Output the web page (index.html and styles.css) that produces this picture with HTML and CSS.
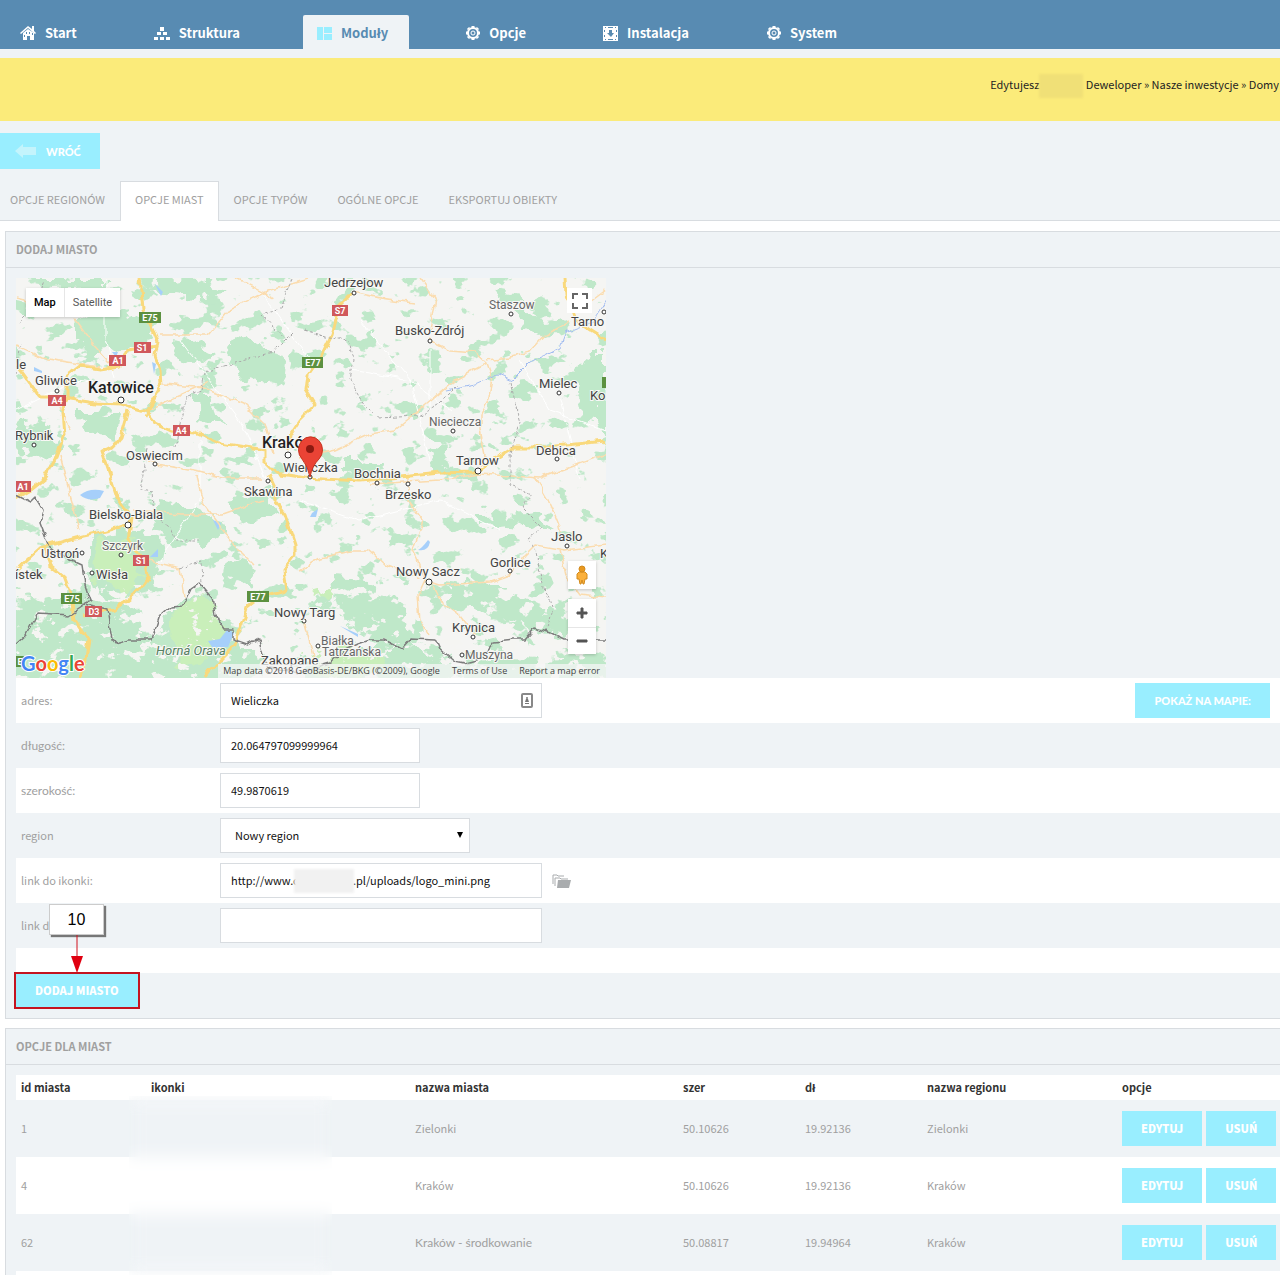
FILE: index.html
```html
<!DOCTYPE html>
<html lang="pl">
<head>
    <meta charset="UTF-8">
    <title>Opcje miast</title>
    <link rel="stylesheet" href="styles.css">
</head>
<body>
    <header class="topbar">
        <nav class="menu">
            <a href="#"><svg width="17" height="16" viewBox="0 0 17 16"><path d="M8 1L0 8l1 1 7-6 7 6 1-1-2-2V1h-2v3z"/><path d="M8 4L3 8v7h4v-4h3v4h4V8z"/><path class="hole" d="M6 7h1v2H6zM9 7h1v2H9zM12 8h1v2h-1zM4 10h1v2H4z"/></svg>Start</a>
            <a href="#"><svg width="17" height="16" viewBox="0 0 17 16"><path d="M6 2h4v4H6zM3 7h4v3H3zM9 7h4v3H9zM0 12h4v3H0zM6 12h4v3H6zM12 12h4v3h-4z"/></svg>Struktura</a>
            <a href="#" class="active"><svg width="16" height="16" viewBox="0 0 16 16"><path d="M0 2h6v13H0zM7 2h8v6H7zM7 9h8v6H7z"/></svg>Moduły</a>
            <a href="#"><svg width="16" height="16" viewBox="0 0 16 16"><circle class="ring" cx="8" cy="8" r="5"/><path class="teeth" d="M8 1v2M8 13v2M1 8h2M13 8h2M3 3l1 1M12 12l1 1M3 13l1-1M12 4l1-1"/><circle class="thin" cx="8" cy="8" r="2"/></svg>Opcje</a>
            <a href="#"><svg width="16" height="16" viewBox="0 0 16 16"><path d="M0 1h15v15H0z"/><path class="hole" d="M2 2h1v1H2zM12 2h1v1h-1zM2 14h1v1H2zM12 14h1v1h-1zM1 5h1v2H1zM1 10h1v2H1zM13 5h1v2h-1zM13 10h1v2h-1zM5 2h5v1H5zM5 14h5v1H5zM6 5h3v3h2l-3 4-4-4h2z"/></svg>Instalacja</a>
            <a href="#"><svg width="16" height="16" viewBox="0 0 16 16"><circle class="ring" cx="8" cy="8" r="5"/><path class="teeth" d="M8 1v2M8 13v2M1 8h2M13 8h2M3 3l1 1M12 12l1 1M3 13l1-1M12 4l1-1"/><circle class="thin" cx="8" cy="8" r="2"/></svg>System</a>
        </nav>
    </header>

    <div class="notice">Edytujesz<span class="smudge"></span> Deweloper » Nasze inwestycje » Domy</div>

    <div class="toolbar">
        <button type="button" class="btn back accented"><svg width="21" height="14" viewBox="0 0 21 14"><path d="M0 7l8-7v3h13v8H8v3z"/></svg>WRÓĆ</button>
    </div>

    <nav class="tabs">
        <a href="#">OPCJE REGIONÓW</a>
        <a href="#" class="active">OPCJE MIAST</a>
        <a href="#">OPCJE TYPÓW</a>
        <a href="#">OGÓLNE OPCJE</a>
        <a href="#">EKSPORTUJ OBIEKTY</a>
    </nav>

    <main>
        <section class="panel">
            <h2>DODAJ MIASTO</h2>
            <form class="panel-body">
                <div class="map">
                    <svg class="map-canvas" viewBox="16 278 590 400">
                        <defs>
                            <filter id="ragged" x="-5%" y="-5%" width="110%" height="110%">
                                <feTurbulence type="fractalNoise" baseFrequency="0.06" numOctaves="3" seed="4"/>
                                <feDisplacementMap in="SourceGraphic" scale="26" xChannelSelector="R" yChannelSelector="G"/>
                            </filter>
                            <filter id="wobble" x="-5%" y="-5%" width="110%" height="110%">
                                <feTurbulence type="fractalNoise" baseFrequency="0.09" numOctaves="2" seed="9"/>
                                <feDisplacementMap in="SourceGraphic" scale="7" xChannelSelector="R" yChannelSelector="G"/>
                            </filter>
                            <filter id="woods" x="0" y="0" width="100%" height="100%" color-interpolation-filters="sRGB">
                                <feTurbulence type="fractalNoise" baseFrequency="0.045 0.06" numOctaves="4" seed="21"/>
                                <feColorMatrix values="0 0 0 0 0.75  0 0 0 0 0.91  0 0 0 0 0.79  22 0 0 0 -13.2"/>
                            </filter>
                            <filter id="valleys" x="0" y="0" width="100%" height="100%" color-interpolation-filters="sRGB">
                                <feTurbulence type="fractalNoise" baseFrequency="0.06 0.08" numOctaves="4" seed="33"/>
                                <feColorMatrix values="0 0 0 0 0.96  0 0 0 0 0.96  0 0 0 0 0.95  22 0 0 0 -13.4"/>
                            </filter>
                        </defs>
                        <rect x="16" y="278" width="590" height="400" fill="#f5f5f3"/>
                        <rect x="16" y="278" width="590" height="400" filter="url(#woods)"/>
                        <g fill="#bfe8c9" filter="url(#ragged)">
                            <path d="M72 322l40-12 30 10 8 22-26 8-30 2-22-14z"/>
                            <path d="M30 280h80l-12 8-50 2zM140 282l40-4 30 6 22 12-26 4-40-6z"/>
                            <path d="M168 342l26 2 20 10-10 8-28-6zM224 352l22-14 30 14 16 20-10 14-40-8z"/>
                            <path d="M196 395l18 0 6 30-20-4zM20 420l30 6 12 24-8 12-38-14z"/>
                            <path d="M80 412l40 0-4 24-30-4zM160 500l50 10 16 22-22 12-50-10z"/>
                            <path d="M584 350l22 0v80l-24-12-8-34z"/>
                            <path d="M500 290l20 4 4 12-26-6zM520 312l36 8 18 10-26 10-24-14z"/>
                            <path d="M340 462l40 0 6 10-36 4zM424 446l20 4 8 26-20-4z"/>
                            <path d="M480 516l56-4 22 14-10 4-30-8-38 2z"/>
                            <path d="M6 600l70-4 60 12 6 36 12 4 12-36 34-22 16 24 20 34 22 0 10 40H6z"/>
                            <path d="M330 578l36 2 30 20 24 30-14 16-40-8-30-28z"/>
                            <path d="M444 580l60 8 60 30 16 18-40-4-40-14-50-14z"/>
                            <path d="M90 535l50-6 24 20-12 38-44 14-20-30z"/>
                            <path d="M230 500l36-8 14 20-36 12zM230 560l26 4-6 24-24-10z"/>
                            <path d="M300 660l60-14 60 0 40 20 40-10 40 4 70-8v36H300z"/>
                        </g>
                        <g fill="#c9efba" filter="url(#ragged)">
                            <path d="M98 540l34 2 12 36-20 16-30-16z"/>
                            <path d="M176 612l28-20 20 40-20 30-30 4zM306 652l40-4 40 14-10 16h-60zM310 592l24-8-4 14z"/>
                        </g>
                        <rect x="16" y="585" width="590" height="93" filter="url(#valleys)"/>
                        <g fill="#a6cffa">
                            <path d="M80 495q10-8 24-4l-4 7q-12 4-20-3zM208 641l12-2 8-10 6 4-6 14-16 0zM150 557l8-8v8zM312 513l6-4-2 8-6 0zM418 550q10 2 12-8l-2-2q-6 8-10 10zM340 626l18 8v3zM155 284l8 8-2 4zM112 352h6l-2 5zM152 362l4 2-2 10zM34 367l8 4 0 2-8-2zM213 520l8 3-3 7z"/>
                        </g>
                        <g class="lanes" filter="url(#wobble)">
                            <path d="M105 278v60l10 40M16 410l60-30 80 10M180 340l60 80 40 90M260 290l50 70M360 320l50 60 20 80M430 350v60M350 370l60 10 40 30M560 400l20 80M300 500l60 20 80-20 60 30M200 440v60l-40 60M520 360l30 50 56 20"/>
                        </g>
                        <g class="roads" filter="url(#wobble)">
                            <path d="M16 346l26 12 24 4 34 5M75 320l15 20 20 22M148 410l60-28M164 384l40 4 40 16 20 20 10 30M158 335l50 0 20-24 40-20 40-12M235 278l40 20M60 455l10 40 10 34M70 430l-10-24M148 462l50 10 24 6 40 0M196 475l8 30 30 40 20 20M133 510l50 4 40 0 40-14M145 560l35 8 4 30"/>
                            <path d="M16 298l40 10M353 292l27 6 35 5M420 278l15 20-5 32M430 340l20 10 25 2 12 11 6 17-3 15-10 20v15l5 25-5 10M487 360l23-3 20-5 15-17 25-13"/>
                            <path d="M487 363l-32 17-23 20-22 18-15 12-25 4-35 16-35 8M408 478v22l15 20-3 10-7 20 5 10 7 20-7 15 2 25 8 15M425 580l15 5 50-3 20-7 15-20 10-10 30 5 41-5M535 478l13 22 7 15 10 25M560 550l5 25 15 20 26 3M300 570l20-12 30-7h20l15 14 35 13M430 580l10 20 20 15 15 20M370 484l70-4 40-6 60 4 66-24M304 620l10 40M606 290l-16 12"/>
                        </g>
                        <g class="highway" filter="url(#wobble)">
                            <path d="M16 364l24 33 17 0 38 6 25 1 25 7 10 12 15 7 25 2 25 11 45 7 0 13 10 10 30 5 55 3 80-8 35-1 25-16 15-9h30l61-6"/>
                            <path d="M140 278l3 32 10 20 5 13-3 12 6 15 1 15-14 25-3 8M67 400l-5 12 2 23-9 25-10 18-15 12-14 8M67 400l0-24 13-10 20 3 20-3 7-16 31-4"/>
                            <path d="M128 410l-8 28-6 8-12 6 8 23 8 25 14 18-4 22 18 22 2 15-13 17-20 15-32 6M16 570l24-22 35-10 35-8 20-6M45 548l5 17 15 12 7 18 3 25 14 20-4 25-5 15"/>
                            <path d="M268 475l7 15v12l10 13 10 30v10l-12 15 3 20-26 7-13 10-7 23-5 15-20 20-10 13"/>
                            <path d="M353 292l-13 13-8 30-10 20-14 20-2 15 9 15-15 15-10 15-2 15M565 278l1 17 9 25 15 10 16 10"/>
                        </g>
                        <path class="border dashed" filter="url(#wobble)" d="M16 326l10-10 10-16 8-20M16 374l5-30M305 330l24 8 20 2 5 20-4 20 14 24 14 14 40-2 20-12 20-20M292 332l-20 20-40 12-28 8-2 20-16 6-6 30-4 20M292 278l-12 30-18 6 24 26M148 450l-8 40 12 2 2 24 16 12 4 12 26 0M180 568l22-6 1 22M510 382l10 40-10 34 0 30 22 8-10 14 20 20-14 10 8 14 6 30 10 30-6 20"/>
                        <path class="river" filter="url(#wobble)" d="M606 300l-14 22-26 10-6 16-30 14-18 18-14-6-22 10-30 6"/>
                        <path class="border" filter="url(#wobble)" d="M16 645l11-10 11-22 32 2 15-10 22 5 5 30 3 4 15-4h22l8-25 10-9 13-1 7-15 10-7 12 14 3 18 10 15h8v10l15 5 10-5 4 15 6 13 32 4 30-9 15-13 13-6 12-4h15l17 9 10-11 23 1 5 11 15 12 10 2 15-4 15-18 20-2h10l10-12 15 5 15 7 46 0M16 495l14 7 5-5 8 13-3 12 10 26 10 7 22 10 3 20 5 15-5 5"/>
                        <g class="shield">
                            <g class="euro"><rect x="139" y="312" width="22" height="11"/><rect x="302" y="357" width="21" height="11"/><rect x="61" y="593" width="21" height="11"/><rect x="247" y="591" width="22" height="11"/><rect x="602" y="377" width="8" height="11"/><rect x="16" y="656" width="8" height="11"/></g>
                            <g class="national"><rect x="332" y="305" width="16" height="11"/><rect x="134" y="342" width="17" height="11"/><rect x="109" y="355" width="17" height="11"/><rect x="48" y="395" width="18" height="11"/><rect x="173" y="425" width="17" height="11"/><rect x="16" y="481" width="15" height="11"/><rect x="133" y="555" width="16" height="11"/><rect x="85" y="606" width="17" height="11"/></g>
                            <text x="150" y="321">E75</text><text x="313" y="366">E77</text><text x="72" y="602">E75</text><text x="258" y="600">E77</text>
                            <text x="340" y="314">S7</text><text x="142" y="351">S1</text><text x="118" y="364">A1</text><text x="57" y="404">A4</text><text x="181" y="434">A4</text><text x="23" y="490">A1</text><text x="141" y="564">S1</text><text x="94" y="615">D3</text><text x="20" y="665">E</text>
                        </g>
                        <g class="dots">
                            <circle cx="57" cy="391" r="2"/><circle cx="34" cy="445" r="2"/><circle cx="121" cy="400" r="3"/><circle cx="354" cy="293" r="2"/><circle cx="511" cy="314" r="2"/><circle cx="430" cy="341" r="2"/><circle cx="604" cy="312" r="2"/><circle cx="559" cy="393" r="2"/><circle cx="453" cy="431" r="2"/><circle cx="155" cy="464" r="2"/><circle cx="288" cy="455" r="3"/><circle cx="268" cy="481" r="2"/><circle cx="310" cy="477" r="2"/><circle cx="377" cy="483" r="2"/><circle cx="408" cy="484" r="2"/><circle cx="478" cy="471" r="3"/><circle cx="557" cy="459" r="2"/><circle cx="128" cy="525" r="3"/><circle cx="82" cy="553" r="2"/><circle cx="121" cy="555" r="2"/><circle cx="92" cy="573" r="2"/><circle cx="567" cy="546" r="2"/><circle cx="510" cy="571" r="2"/><circle cx="429" cy="582" r="3"/><circle cx="304" cy="621" r="2"/><circle cx="473" cy="637" r="2"/><circle cx="318" cy="646" r="2"/><circle cx="462" cy="655" r="2"/>
                        </g>
                        <g class="places">
                            <text x="324" y="287">Jedrzejow</text><text x="395" y="335">Busko-Zdrój</text><text x="571" y="326">Tarno</text><text x="539" y="388">Mielec</text><text x="590" y="400">Kol</text><text x="35" y="385">Gliwice</text><text x="16" y="369">le</text><text x="15" y="440">Rybnik</text><text x="126" y="460">Oswiecim</text><text x="283" y="472">Wieliczka</text><text x="244" y="496">Skawina</text><text x="354" y="478">Bochnia</text><text x="385" y="499">Brzesko</text><text x="456" y="465">Tarnow</text><text x="536" y="455">Debica</text><text x="89" y="519">Bielsko-Biala</text><text x="41" y="558">Ustroń</text><text x="96" y="579">Wisła</text><text x="15" y="579">ístek</text><text x="551" y="541">Jaslo</text><text x="600" y="558">K</text><text x="490" y="567">Gorlice</text><text x="396" y="576">Nowy Sacz</text><text x="274" y="617">Nowy Targ</text><text x="452" y="632">Krynica</text><text x="261" y="665">Zakopane</text>
                            <text x="88" y="393" class="city">Katowice</text><text x="262" y="448" class="city">Kraków</text>
                            <g class="small"><text x="489" y="309">Staszow</text><text x="429" y="426">Nieciecza</text><text x="102" y="550">Szczyrk</text><text x="321" y="645">Białka</text><text x="322" y="656">Tatrzańska</text><text x="465" y="659">Muszyna</text></g>
                            <text x="156" y="655" class="region">Horná Orava</text>
                        </g>
                        <path d="M310 477q-2-11-8-18a12 13 0 1 1 17 0q-7 7-9 18z" fill="#ea4335" stroke="#c5331f"/>
                        <circle cx="310" cy="449" r="4" fill="#8c1a11"/>
                        <text class="google" x="21" y="671"><tspan fill="#4285f4">G</tspan><tspan fill="#ea4335">o</tspan><tspan fill="#fbbc05">o</tspan><tspan fill="#4285f4">g</tspan><tspan fill="#34a853">l</tspan><tspan fill="#ea4335">e</tspan></text>
                    </svg>
                    <div class="map-type">
                        <button type="button" class="active">Map</button>
                        <button type="button">Satellite</button>
                    </div>
                    <button type="button" class="map-full" aria-label="Fullscreen"><svg width="16" height="16" viewBox="0 0 16 16"><path d="M1 6V1h5M10 1h5v5M15 10v5h-5M6 15H1v-5"/></svg></button>
                    <div class="map-side">
                        <button type="button" aria-label="Street View"><svg width="12" height="20" viewBox="0 0 12 20"><path d="M3 7h6l2 2 0 5-2 0-1 5H7l-1-4-1 4H4l-1-5-2 0V9z" fill="#fbb03b" stroke="#d28a1c"/><circle cx="6" cy="4" r="3" fill="#e8981f" stroke="#d28a1c"/></svg></button>
                        <div class="zoom">
                            <button type="button" aria-label="Zoom in"><svg width="12" height="12" viewBox="0 0 12 12"><path d="M5 1h2v4h4v2H7v4H5V7H1V5h4z" fill="#555" stroke="#555"/></svg></button>
                            <button type="button" aria-label="Zoom out"><svg width="12" height="12" viewBox="0 0 12 12"><path d="M1 5h10v2H1z" fill="#555" stroke="#555"/></svg></button>
                        </div>
                    </div>
                    <div class="map-legal">
                        <span>Map data ©2018 GeoBasis-DE/BKG (©2009), Google</span>
                        <a href="#">Terms of Use</a>
                        <a href="#">Report a map error</a>
                    </div>
                </div>

                <div class="row">
                    <label for="adres">adres:</label>
                    <div class="field">
                        <input type="text" id="adres" class="wide" value="Wieliczka">
                        <svg class="contact" width="12" height="15" viewBox="0 0 12 15"><rect x="1" y="1" width="10" height="13" rx="1" fill="#fff" stroke="#888" stroke-width="2"/><circle cx="6" cy="5" r="1" fill="#777"/><path d="M5 6h2l1 3H4zM4 10h4v1H4z" fill="#777"/></svg>
                    </div>
                    <button type="button" class="btn show-map accented">POKAŻ NA MAPIE:</button>
                </div>
                <div class="row">
                    <label for="dlugosc" class="accented">długość:</label>
                    <input type="text" id="dlugosc" value="20.064797099999964">
                </div>
                <div class="row">
                    <label for="szerokosc" class="accented">szerokość:</label>
                    <input type="text" id="szerokosc" value="49.9870619">
                </div>
                <div class="row">
                    <label for="region">region</label>
                    <div class="select">
                        <select id="region"><option>Nowy region</option></select>
                    </div>
                </div>
                <div class="row">
                    <label for="ikonka">link do ikonki:</label>
                    <div class="field">
                        <input type="text" id="ikonka" class="wide" value="http://www.c                      .pl/uploads/logo_mini.png">
                        <span class="smudge"></span>
                    </div>
                    <svg class="folder" width="20" height="16" viewBox="0 0 20 16"><path d="M1 11V2h4l1 1h6M3 13V5h5l1 1h7" fill="none" stroke="#a9acae"/><path d="M6 7h13l-2 8H5z" fill="#a9acae"/></svg>
                </div>
                <div class="row">
                    <label for="ikonka2">link d</label>
                    <input type="text" id="ikonka2" class="wide">
                </div>
                <div class="row spacer"></div>
                <div class="submit">
                    <button type="button" class="btn">DODAJ MIASTO</button>
                    <div class="frame"></div>
                    <div class="callout">
                        <span>10</span>
                        <svg width="12" height="38" viewBox="0 0 12 38"><path d="M6 0v22" stroke="#d0101c"/><path d="M0 21h12L6 38z" fill="#e00010"/></svg>
                    </div>
                </div>
            </form>
        </section>

        <section class="panel">
            <h2>OPCJE DLA MIAST</h2>
            <div class="panel-body list">
                <table>
                    <thead>
                        <tr>
                            <th class="c-id">id miasta</th>
                            <th class="c-icon">ikonki</th>
                            <th>nazwa miasta</th>
                            <th class="c-geo">szer</th>
                            <th class="c-geo">dł</th>
                            <th class="c-region">nazwa regionu</th>
                            <th class="c-options">opcje</th>
                        </tr>
                    </thead>
                    <tbody>
                        <tr>
                            <td>1</td>
                            <td></td>
                            <td>Zielonki</td>
                            <td>50.10626</td>
                            <td>19.92136</td>
                            <td>Zielonki</td>
                            <td><div class="options"><button type="button" class="btn">EDYTUJ</button><button type="button" class="btn">USUŃ</button></div></td>
                        </tr>
                        <tr>
                            <td>4</td>
                            <td></td>
                            <td>Kraków</td>
                            <td>50.10626</td>
                            <td>19.92136</td>
                            <td>Kraków</td>
                            <td><div class="options"><button type="button" class="btn">EDYTUJ</button><button type="button" class="btn">USUŃ</button></div></td>
                        </tr>
                        <tr>
                            <td>62</td>
                            <td></td>
                            <td class="accented">Kraków - środkowanie</td>
                            <td>50.08817</td>
                            <td>19.94964</td>
                            <td>Kraków</td>
                            <td><div class="options"><button type="button" class="btn">EDYTUJ</button><button type="button" class="btn">USUŃ</button></div></td>
                        </tr>
                        <tr class="end"><td colspan="7"></td></tr>
                    </tbody>
                </table>
                <div class="veil"></div>
            </div>
        </section>
    </main>
</body>
</html>
```
FILE: styles.css
```css
* {
    box-sizing: border-box;
}
body {
    margin: 0;
    background: #fff;
    font-family: "Noto Sans CJK SC", "Open Sans", sans-serif;
    font-size: 11px;
    line-height: 15px;
    color: #a0a0a0;
}
a {
    color: inherit;
    text-decoration: none;
}
button, input, select {
    font: inherit;
    margin: 0;
}
/* the main font has no precomposed s, c and z with accents */
.accented {
    font-family: Lato, sans-serif;
    font-size: 12px;
}
.topbar {
    background: #588bb2;
    padding: 15px 0 0 6px;
}
.menu {
    display: flex;
    gap: 42px;
}
.menu a {
    display: flex;
    align-items: center;
    gap: 8px;
    height: 34px;
    padding: 1px 21px 0 14px;
    color: #fff;
    font-size: 13px;
    font-weight: bold;
}
.menu svg {
    fill: #fff;
}
.menu .active {
    background: #eff3f6;
    color: #588bb2;
    border-radius: 2px 2px 0 0;
}
.menu .active svg {
    fill: #99eeff;
}
.menu .hole {
    fill: #588bb2;
}
.menu .ring {
    fill: none;
    stroke: #fff;
    stroke-width: 2;
}
.menu .thin {
    fill: none;
    stroke: #fff;
}
.menu .teeth {
    stroke: #fff;
    stroke-width: 3;
}
.notice {
    border-top: 9px solid #eff3f6;
    background: #fbeb7a;
    height: 72px;
    padding: 16px 1px 0 0;
    text-align: right;
    white-space: nowrap;
    color: #222;
}
.smudge {
    display: inline-block;
    width: 44px;
    height: 24px;
    vertical-align: middle;
    background: #f0e077;
    filter: blur(1px);
}
.toolbar {
    background: #eff3f6;
    padding: 12px 0;
}
.btn {
    height: 35px;
    padding: 0 19px;
    border: 0;
    background: #99eeff;
    color: #fff;
    font-weight: 900;
    white-space: nowrap;
    cursor: pointer;
}
.btn.accented {
    font-size: 11px;
}
.back {
    display: flex;
    align-items: center;
    gap: 10px;
    height: 36px;
    padding: 0 19px 0 15px;
}
.back svg {
    fill: #c4f4fc;
}
.tabs {
    display: flex;
    height: 40px;
    background: #eff3f6;
    border-bottom: 1px solid #d8dce0;
}
.tabs a {
    height: 40px;
    padding: 10px 14px;
    border: 1px solid transparent;
    border-bottom: 0;
}
.tabs a:first-child {
    padding-left: 9px;
}
.tabs .active {
    background: #fff;
    border-color: #d8dce0;
}
main {
    padding: 10px 0 0 5px;
}
.panel {
    margin-bottom: 9px;
    border: 1px solid #d8dce0;
    border-right: 0;
    background: #eff3f6;
}
.panel:last-child {
    margin: 0;
    border-bottom: 0;
}
.panel h2 {
    margin: 0;
    height: 36px;
    padding: 10px;
    border-bottom: 1px solid #d8dce0;
    font-size: 11px;
    line-height: 15px;
    font-weight: bold;
}
.panel-body {
    padding: 10px 0 10px 10px;
}
.list {
    position: relative;
    padding-bottom: 0;
}

/* map */
.map {
    position: relative;
    width: 590px;
    font-family: Roboto, sans-serif;
}
.map-canvas {
    display: block;
    width: 100%;
}
.lanes, .roads, .highway, .border, .river {
    fill: none;
    stroke-linejoin: round;
}
.lanes {
    stroke: #fff;
}
.roads {
    stroke: #fbdcae;
    stroke-width: 1.5;
}
.highway {
    stroke: #f9d97c;
    stroke-width: 3;
}
.river {
    stroke: #a3bdf0;
}
.border {
    stroke: #7d7d7d;
    stroke-width: 1.5;
}
.dashed {
    stroke: #aaa;
    stroke-width: 1;
    stroke-dasharray: 3 2;
}
.euro {
    fill: #5c9140;
}
.national {
    fill: #d0585b;
}
.shield text {
    fill: #fff;
    font-size: 9px;
    font-weight: bold;
    text-anchor: middle;
}
.dots {
    fill: #fff;
    stroke: #333;
}
.places {
    fill: #444;
    font-size: 13px;
    stroke: #f8f8f6;
    stroke-width: 2;
    paint-order: stroke;
}
.places .city {
    fill: #222;
    font-size: 16px;
    font-weight: 500;
}
.places .small {
    fill: #666;
    font-size: 12px;
}
.places .region {
    fill: #557f62;
    font-style: italic;
}
.google {
    font-family: Lato, sans-serif;
    font-size: 20px;
    font-weight: bold;
    stroke: #fff;
    stroke-width: 2;
    paint-order: stroke;
}
.map button {
    border: 0;
    padding: 0;
    background: #fff;
    display: flex;
    align-items: center;
    justify-content: center;
}
.map .map-type {
    position: absolute;
    left: 10px;
    top: 10px;
    display: flex;
    box-shadow: 0 1px 3px rgba(0, 0, 0, 0.2);
}
.map .map-type button {
    height: 29px;
    padding: 0 8px;
    color: #565656;
}
.map .map-type .active {
    border-right: 1px solid #e6e6e6;
    color: #000;
    font-weight: 500;
}
.map-full {
    position: absolute;
    right: 14px;
    top: 10px;
    width: 25px;
    height: 25px;
}
.map-full path {
    fill: none;
    stroke: #666;
    stroke-width: 2;
}
.map-side {
    position: absolute;
    right: 10px;
    bottom: 24px;
    display: flex;
    flex-direction: column;
    gap: 10px;
}
.map-side button {
    width: 28px;
    height: 28px;
}
.map-side > button, .zoom {
    box-shadow: 0 1px 3px rgba(0, 0, 0, 0.2);
}
.map .zoom button + button {
    height: 27px;
    border-top: 1px solid #e6e6e6;
}
.map-legal {
    position: absolute;
    right: 0;
    bottom: 0;
    display: flex;
    gap: 12px;
    height: 14px;
    padding: 0 6px 0 5px;
    background: rgba(245, 245, 245, 0.75);
    color: #444;
    font-family: "Open Sans", sans-serif;
    font-size: 9px;
    line-height: 14px;
    white-space: nowrap;
}

/* form */
.row {
    display: flex;
    align-items: center;
    min-height: 45px;
}
.row:nth-child(even) {
    background: #fff;
}
.row label {
    width: 204px;
    padding-left: 5px;
}
.row input, .row select {
    display: block;
    width: 200px;
    height: 35px;
    padding: 0 10px 2px;
    border: 1px solid #d8dce0;
    border-radius: 0;
    background: #fff;
    color: #111;
}
.row .wide {
    width: 322px;
}
.field, .select {
    position: relative;
}
.contact {
    position: absolute;
    right: 9px;
    top: 10px;
}
.field .smudge {
    position: absolute;
    left: 74px;
    top: 6px;
    width: 60px;
    background: #f1f1f1;
}
.row select {
    width: 250px;
    padding: 0 14px;
    appearance: none;
}
.select::after {
    content: "";
    position: absolute;
    right: 7px;
    top: 14px;
    border: 3px solid transparent;
    border-top: 6px solid #000;
    border-bottom: 0;
}
.folder {
    margin-left: 10px;
}
.show-map {
    margin: 0 10px 0 auto;
}
.row.spacer {
    min-height: 25px;
}
.submit {
    position: relative;
    width: max-content;
}
.submit .btn {
    display: block;
}
.frame {
    position: absolute;
    inset: -1px -2px;
    border: 2px solid #c41420;
    pointer-events: none;
}
.callout {
    position: absolute;
    left: 33px;
    bottom: 100%;
    display: flex;
    flex-direction: column;
    align-items: center;
}
.callout span {
    width: 55px;
    height: 31px;
    border: 1px solid #ccc;
    background: #fff;
    box-shadow: 2px 2px 1px #777;
    color: #000;
    font-family: "Liberation Sans", Arial, sans-serif;
    font-size: 16px;
    line-height: 29px;
    text-align: center;
}

/* city list */
table {
    width: 100%;
    border-collapse: collapse;
    table-layout: fixed;
}
th, td {
    padding: 5px;
    text-align: left;
}
th {
    background: #fff;
    color: #333;
}
td {
    height: 57px;
}
tbody tr:nth-child(even) {
    background: #fff;
}
.end td {
    height: 4px;
    padding: 0;
}
.c-id {
    width: 130px;
}
.c-icon {
    width: 264px;
}
.c-geo {
    width: 122px;
}
.c-region {
    width: 195px;
}
.c-options {
    width: 163px;
}
.options {
    display: flex;
    gap: 4px;
}
/* softens the stripes under the icons column */
.veil {
    position: absolute;
    left: 123px;
    top: 31px;
    bottom: 0;
    width: 203px;
    backdrop-filter: blur(8px);
}
```
